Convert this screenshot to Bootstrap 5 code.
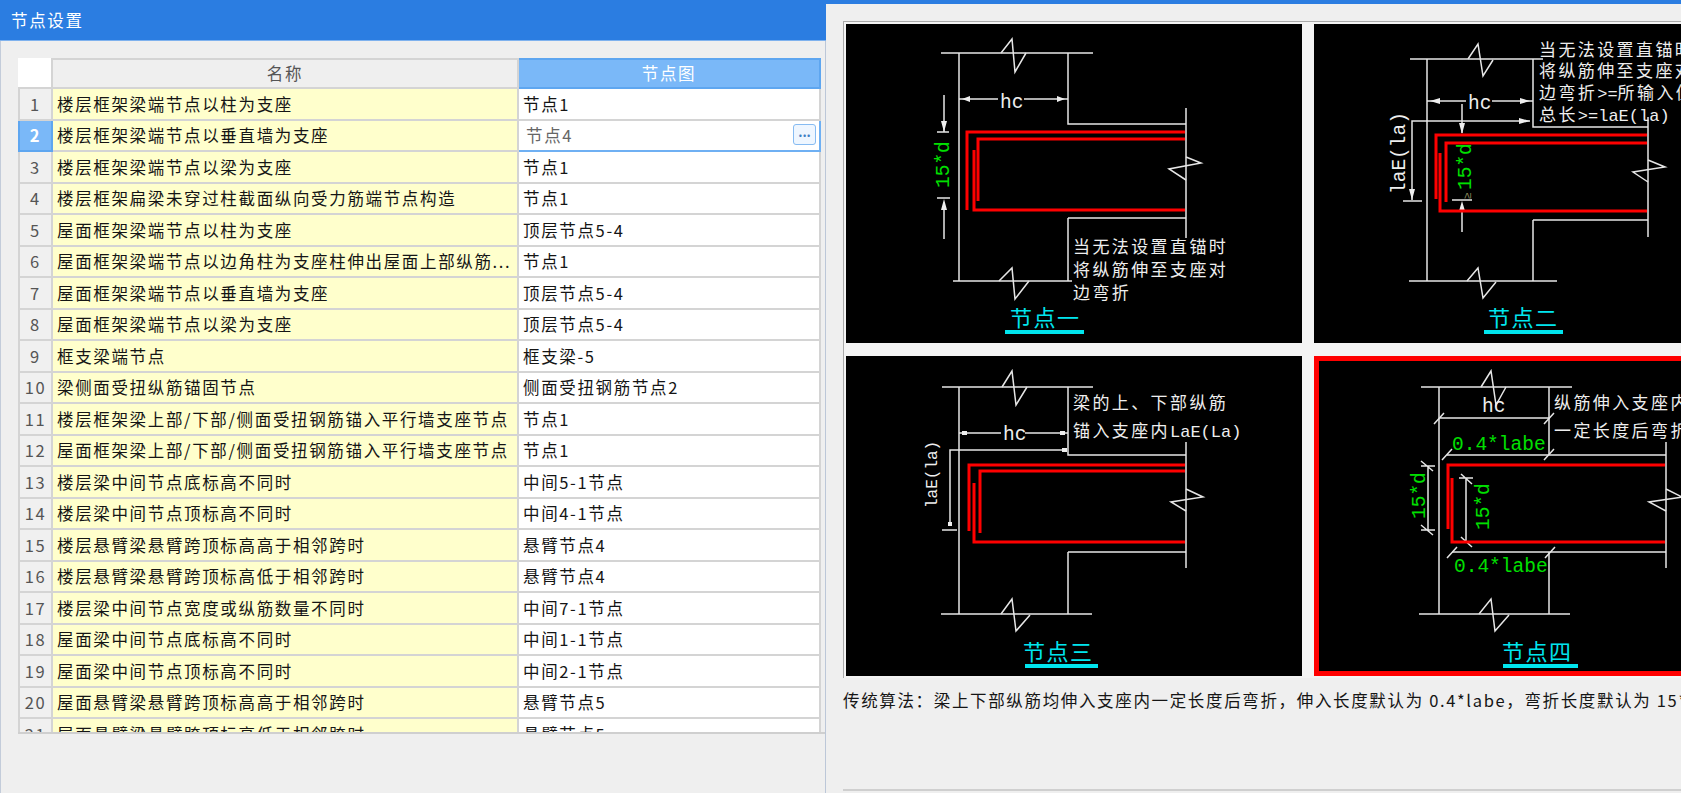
<!DOCTYPE html>
<html lang="zh">
  <head>
    <meta charset="utf-8" />
    <meta name="viewport" content="width=device-width" />
    <title>节点设置</title>
    <link
      href="https://cdn.jsdelivr.net/npm/bootstrap@5.3.3/dist/css/bootstrap.min.css"
      rel="stylesheet"
    />
    <script src="https://cdn.jsdelivr.net/npm/bootstrap@5.3.3/dist/js/bootstrap.bundle.min.js"></script>

    <style>
      body {
        height: 793px;
        overflow: hidden;
        background: #efefef;
        color: #151515;
        font-family: "Noto Sans CJK SC", "Liberation Sans", sans-serif;
        font-size: 16.5px;
        letter-spacing: 1.65px;
      }

      .left-pane {
        width: 826px;
        flex: none;
        border-left: 1px solid #c3ccda;
        border-right: 1px solid #bcc7d8;
      }

      .title-bar {
        height: 41px;
        margin-left: -1px;
        margin-right: -1px;
        padding-left: 11px;
        line-height: 40px;
        background: #2b7de1;
        color: #fff;
        border-bottom: 1px solid #7fb2ee;
      }

      .grid-frame {
        height: 676px;
        margin: 17px 0 0 17px;
        overflow: hidden;
        border-bottom: 2px solid #cfcfcf;
      }

      .node-grid {
        width: 803px;
        table-layout: fixed;
        border-collapse: collapse;
      }

      .node-grid th,
      .node-grid td {
        height: 31.5px;
        padding: 0 4px;
        border: 2px solid #d4d4d4;
        font-weight: 400;
        line-height: 1;
        white-space: nowrap;
        overflow: hidden;
      }

      .node-grid .col-no {
        width: 33px;
        padding: 0;
        background: #f0f0f0;
        color: #555;
        text-align: center;
      }

      .node-grid .col-name {
        width: 466px;
        background: #ffffcc;
      }

      .node-grid .col-value {
        background: #fff;
      }

      .node-grid th.corner {
        height: 29px;
        background: #fff;
        border-color: #fff #d4d4d4 #d4d4d4 #fff;
      }

      .node-grid th.head-name {
        height: 29px;
        background: #efefef;
        color: #555;
        text-align: center;
      }

      .node-grid th.head-value {
        height: 29px;
        background: #7ab8f8;
        border-color: #5ea6f0;
        color: #fff;
        text-align: center;
      }

      .node-grid td.row-active {
        background: #7ab8f8;
        border-color: #5ea6f0;
        color: #fff;
        font-weight: 700;
      }

      .node-grid td.cell-editing {
        position: relative;
        padding-left: 7px;
        border-color: #6fb0f3;
        color: #666;
      }

      .pick-btn {
        position: absolute;
        top: 3px;
        right: 3px;
        width: 23px;
        height: 21px;
        padding: 0 0 6px;
        background: #eef6ff;
        border: 1px solid #86bbf2;
        border-radius: 3px;
        color: #3f7fc4;
        font-size: 13px;
        font-weight: 700;
        line-height: 1;
        letter-spacing: 0;
      }

      .right-pane {
        min-width: 0;
        border-top: 4px solid #2b7de1;
        padding: 17px 0 0 17px;
        overflow: hidden;
      }

      .drawing-frame {
        display: grid;
        grid-template-columns: 456px 456px;
        grid-template-rows: 319px 320px;
        gap: 13px 12px;
        width: 930px;
        padding: 2px 0 2px 2px;
        background: #f4f4f4;
        border-left: 1px solid #aaa;
        border-top: 1px solid #aaa;
      }

      .drawing-frame svg {
        display: block;
        background: #000;
      }

      .cad-line {
        fill: none;
        stroke: #e6e6e6;
        stroke-width: 1.5;
      }

      .cad-rebar {
        fill: none;
        stroke: #f00;
        stroke-width: 3;
      }

      .cad-arrow {
        fill: #eee;
      }

      .cad-note {
        fill: #eee;
        font-size: 17px;
        letter-spacing: 2.4px;
      }

      .cad-note tspan {
        font-family: "Liberation Mono", monospace;
        font-size: 17px;
        letter-spacing: 0;
      }

      .cad-mono {
        fill: #eee;
        font-family: "Liberation Mono", monospace;
        font-size: 19.5px;
        letter-spacing: 0;
      }

      .cad-mono-small {
        font-size: 16px;
      }

      .cad-green {
        fill: #00e000;
      }

      .cad-ge {
        fill: #8a8a5a;
        font-size: 11px;
      }

      .cad-title {
        fill: #00e5ee;
        font-size: 22px;
        letter-spacing: 1.5px;
      }

      .cad-bar {
        fill: #00e5ee;
      }

      .cad-selected {
        fill: none;
        stroke: #f00;
        stroke-width: 5;
      }

      .hint-line {
        margin: 10px 0 0;
        white-space: nowrap;
        line-height: 24px;
      }

      .hint-rule {
        height: 2px;
        width: 900px;
        margin-top: 77px;
        background: #cfcfcf;
      }
    </style>
  </head>

  <body class="d-flex m-0">
    <div class="left-pane">
      <div class="title-bar">节点设置</div>
      <div class="grid-frame">
        <table class="node-grid">
          <thead>
            <tr>
              <th class="col-no corner"></th>
              <th class="col-name head-name">名称</th>
              <th class="head-value">节点图</th>
            </tr>
          </thead>
          <tbody>
            <tr><td class="col-no">1</td><td class="col-name">楼层框架梁端节点以柱为支座</td><td class="col-value">节点1</td></tr>
            <tr>
              <td class="col-no row-active">2</td>
              <td class="col-name">楼层框架梁端节点以垂直墙为支座</td>
              <td class="col-value cell-editing">节点4<button type="button" class="pick-btn">...</button></td>
            </tr>
            <tr><td class="col-no">3</td><td class="col-name">楼层框架梁端节点以梁为支座</td><td class="col-value">节点1</td></tr>
            <tr><td class="col-no">4</td><td class="col-name">楼层框架扁梁未穿过柱截面纵向受力筋端节点构造</td><td class="col-value">节点1</td></tr>
            <tr><td class="col-no">5</td><td class="col-name">屋面框架梁端节点以柱为支座</td><td class="col-value">顶层节点5-4</td></tr>
            <tr><td class="col-no">6</td><td class="col-name">屋面框架梁端节点以边角柱为支座柱伸出屋面上部纵筋...</td><td class="col-value">节点1</td></tr>
            <tr><td class="col-no">7</td><td class="col-name">屋面框架梁端节点以垂直墙为支座</td><td class="col-value">顶层节点5-4</td></tr>
            <tr><td class="col-no">8</td><td class="col-name">屋面框架梁端节点以梁为支座</td><td class="col-value">顶层节点5-4</td></tr>
            <tr><td class="col-no">9</td><td class="col-name">框支梁端节点</td><td class="col-value">框支梁-5</td></tr>
            <tr><td class="col-no">10</td><td class="col-name">梁侧面受扭纵筋锚固节点</td><td class="col-value">侧面受扭钢筋节点2</td></tr>
            <tr><td class="col-no">11</td><td class="col-name">楼层框架梁上部/下部/侧面受扭钢筋锚入平行墙支座节点</td><td class="col-value">节点1</td></tr>
            <tr><td class="col-no">12</td><td class="col-name">屋面框架梁上部/下部/侧面受扭钢筋锚入平行墙支座节点</td><td class="col-value">节点1</td></tr>
            <tr><td class="col-no">13</td><td class="col-name">楼层梁中间节点底标高不同时</td><td class="col-value">中间5-1节点</td></tr>
            <tr><td class="col-no">14</td><td class="col-name">楼层梁中间节点顶标高不同时</td><td class="col-value">中间4-1节点</td></tr>
            <tr><td class="col-no">15</td><td class="col-name">楼层悬臂梁悬臂跨顶标高高于相邻跨时</td><td class="col-value">悬臂节点4</td></tr>
            <tr><td class="col-no">16</td><td class="col-name">楼层悬臂梁悬臂跨顶标高低于相邻跨时</td><td class="col-value">悬臂节点4</td></tr>
            <tr><td class="col-no">17</td><td class="col-name">楼层梁中间节点宽度或纵筋数量不同时</td><td class="col-value">中间7-1节点</td></tr>
            <tr><td class="col-no">18</td><td class="col-name">屋面梁中间节点底标高不同时</td><td class="col-value">中间1-1节点</td></tr>
            <tr><td class="col-no">19</td><td class="col-name">屋面梁中间节点顶标高不同时</td><td class="col-value">中间2-1节点</td></tr>
            <tr><td class="col-no">20</td><td class="col-name">屋面悬臂梁悬臂跨顶标高高于相邻跨时</td><td class="col-value">悬臂节点5</td></tr>
            <tr><td class="col-no">21</td><td class="col-name">屋面悬臂梁悬臂跨顶标高低于相邻跨时</td><td class="col-value">悬臂节点5</td></tr>
          </tbody>
        </table>
      </div>
    </div>

    <div class="right-pane flex-fill">
      <div class="drawing-frame">
        <!-- 节点一 -->
        <svg width="456" height="319" viewBox="0 0 456 319">
          <path class="cad-line" d="M95 29H247M113 29V257M222 29V100H340M340 84V214M222 194H340M222 194V257M107 257H226" />
          <path class="cad-line" d="M155 29L166 15L169 48L180 29M153 257L166 244L169 275L183 257M340 133L355 139L323 145L340 156" />
          <path class="cad-line" d="M113 75H152M178 75H222M98 71V108M91 108H103M91 174H104M98 179V215" />
          <path class="cad-arrow" d="M116 75L124 72V78ZM219 75L211 72V78ZM98 108L95 97H101ZM98 175L95 186H101Z" />
          <path class="cad-rebar" d="M121 186V108H339M132 177V115H339" />
          <path class="cad-rebar" d="M128 126V186H339" />
          <text class="cad-mono" x="154" y="84">hc</text>
          <text class="cad-mono cad-green" transform="rotate(-90 103 164)" x="103" y="164">15*d</text>
          <text class="cad-note" x="227" y="229">当无法设置直锚时</text>
          <text class="cad-note" x="227" y="252">将纵筋伸至支座对</text>
          <text class="cad-note" x="227" y="275">边弯折</text>
          <text class="cad-title" x="164" y="302">节点一</text>
          <rect class="cad-bar" x="159" y="306" width="79" height="4" />
        </svg>

        <!-- 节点二 -->
        <svg width="456" height="319" viewBox="0 0 456 319">
          <path class="cad-line" d="M96 35H229M113 35V257M219 35V103H334M334 93V213M219 196H334M219 196V257M95 257H243" />
          <path class="cad-line" d="M154 35L164 20L169 52L179 36M153 257L164 244L169 274L182 258M334 136L351 143L319 148L334 158" />
          <path class="cad-line" d="M113 77H152M178 77H219M216 97H98V176M89 177H108M148 80V109M138 176H158M148 183V208" />
          <path class="cad-arrow" d="M116 77L126 74V80ZM216 77L206 74V80ZM216 97L205 94V100ZM98 176L95 165H101ZM148 110L145 99H151ZM148 177L145 187H151Z" />
          <path class="cad-rebar" d="M122 175V111H333M132 178V119H333" />
          <path class="cad-rebar" d="M126 129V187H333" />
          <text class="cad-mono" x="154" y="85">hc</text>
          <text class="cad-mono cad-green" transform="rotate(-90 157 166)" x="157" y="166">15*d</text>
          <text class="cad-mono cad-ge" transform="rotate(-90 157 175)" x="157" y="175">≥</text>
          <text class="cad-mono" transform="rotate(-90 91 170)" x="91" y="170">laE(la)</text>
          <text class="cad-note" x="225" y="32">当无法设置直锚时</text>
          <text class="cad-note" x="225" y="53">将纵筋伸至支座对</text>
          <text class="cad-note" x="225" y="75">边弯折<tspan>&gt;=</tspan>所输入值</text>
          <text class="cad-note" x="225" y="97">总长<tspan>&gt;=laE(la)</tspan></text>
          <text class="cad-title" x="174" y="302">节点二</text>
          <rect class="cad-bar" x="170" y="306" width="79" height="4" />
        </svg>

        <!-- 节点三 -->
        <svg width="456" height="320" viewBox="0 0 456 320">
          <path class="cad-line" d="M96 31H247M113 31V258M222 31V99H340M340 86V212M222 196H340M222 196V258M95 258H246" />
          <path class="cad-line" d="M156 31L166 15L170 49L181 31M155 258L166 243L170 275L184 259M340 133L357 141L325 146L340 155" />
          <path class="cad-line" d="M113 77H155M179 77H222M220 94H104V168M96 174H111" />
          <path class="cad-arrow" d="M116 75H121V79H116ZM214 75H219V79H214ZM216 92H221V96H216ZM102 166H106V170H102Z" />
          <path class="cad-rebar" d="M123 175V109H339M134 177V115H339" />
          <path class="cad-rebar" d="M128 127V186H339" />
          <text class="cad-mono" x="157" y="84">hc</text>
          <text class="cad-mono cad-mono-small" transform="rotate(-90 91 152)" x="91" y="152">laE(la)</text>
          <text class="cad-note" x="227" y="53">梁的上、下部纵筋</text>
          <text class="cad-note" x="227" y="81">锚入支座内<tspan>LaE(La)</tspan></text>
          <text class="cad-title" x="177" y="304">节点三</text>
          <rect class="cad-bar" x="179" y="308" width="73" height="4" />
        </svg>

        <!-- 节点四, 当前选中 -->
        <svg width="456" height="320" viewBox="0 0 456 320">
          <rect class="cad-selected" x="2.5" y="2.5" width="451" height="315" />
          <path class="cad-line" d="M107 31H258M125 31V258M235 31V99M133 99H352M352 86V212M138 196H352M235 196V258M105 258H256" />
          <path class="cad-line" d="M167 31L177 15L182 49L192 31M165 258L177 243L181 275L195 259M352 133L368 141L335 146L352 155" />
          <path class="cad-line" d="M125 62H235M120 68L130 57M230 68L240 57M128 104L138 93M230 104L240 93M133 202L143 191M231 202L241 191" />
          <path class="cad-line" d="M114 110V174M107 110H121M107 174H121M107 105L119 115M107 169L119 179" />
          <path class="cad-line" d="M152 122V186M145 122H159M147 118L158 128M147 181L158 191" />
          <path class="cad-rebar" d="M134 173V109H351M138 122V186H351" />
          <text class="cad-mono" x="168" y="56">hc</text>
          <text class="cad-mono cad-green" x="138" y="94">0.4*labe</text>
          <text class="cad-mono cad-green" x="140" y="216">0.4*labe</text>
          <text class="cad-mono cad-green" transform="rotate(-90 111 163)" x="111" y="163">15*d</text>
          <text class="cad-mono cad-green" transform="rotate(-90 175 174)" x="175" y="174">15*d</text>
          <text class="cad-note" x="240" y="53">纵筋伸入支座内</text>
          <text class="cad-note" x="240" y="81">一定长度后弯折</text>
          <text class="cad-title" x="188" y="304">节点四</text>
          <rect class="cad-bar" x="189" y="308" width="75" height="4" />
        </svg>
      </div>
      <p class="hint-line">传统算法&#xFF1A;梁上下部纵筋均伸入支座内一定长度后弯折&#xFF0C;伸入长度默认为 0.4*labe&#xFF0C;弯折长度默认为 15*d</p>
      <div class="hint-rule"></div>
    </div>
  </body>
</html>
